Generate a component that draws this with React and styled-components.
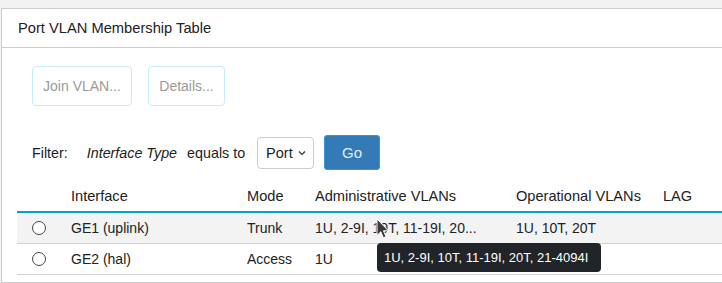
import React from 'react'
import styled, { createGlobalStyle } from 'styled-components'

const GlobalStyle = createGlobalStyle`
    body {
        margin: 0;
        background: #f2f2f2;
        font-family: 'Liberation Sans', Arial, sans-serif;
        color: #222;
        overflow: hidden;
    }
`

const Page = styled.div`
    padding: 8px 0 0 1px;
    height: 283px;
    box-sizing: border-box;
`

const Card = styled.div`
    position: relative;
    background: #fff;
    border: 1px solid #ccc;
    border-right: none;
    height: 100%;
    box-sizing: border-box;
`

const CardHeader = styled.div`
    display: flex;
    align-items: center;
    height: 38px;
    padding-left: 16px;
    font-size: 14.7px;
    border-bottom: 1px solid #ccc;
`

const Toolbar = styled.div`
    display: flex;
    gap: 16px;
    padding: 18px 0 0 30px;
`

const GhostButton = styled.button`
    height: 40px;
    width: ${(p) => p.width}px;
    background: #fff;
    border: 1px solid #c6ecf7;
    border-radius: 4px;
    color: #9a9a9a;
    font-family: inherit;
    font-size: 14px;
    padding: 0;
`

const FilterRow = styled.div`
    display: flex;
    align-items: center;
    padding: 29px 0 0 30px;
    font-size: 14.3px;
`

const FilterLabel = styled.span`
    margin-right: 19px;
`

const FieldName = styled.em`
    margin-right: 10px;
`

const Select = styled.div`
    display: flex;
    align-items: center;
    justify-content: space-between;
    box-sizing: border-box;
    width: 57px;
    height: 32px;
    margin-left: 12px;
    padding: 0 7px 0 8px;
    border: 1px solid #ccc;
    border-radius: 4px;
    font-size: 14.5px;
`

const GoButton = styled.button`
    width: 56px;
    height: 35px;
    margin-left: 10px;
    background: #337ab7;
    border: 1px solid #2b9bd6;
    border-radius: 3px;
    color: #e4ecf4;
    font-family: inherit;
    font-size: 15px;
    padding: 0;
`

const Table = styled.div`
    margin: 10px 0 0 15px;
    font-size: 14px;
`

const Row = styled.div`
    display: grid;
    grid-template-columns: 54px 176px 68px 201px 147px 1fr;
    align-items: center;
    height: ${(p) => (p.head ? 31 : 30)}px;
    background: ${(p) => (p.shaded ? '#f3f3f3' : '#fff')};
    border-bottom: ${(p) => (p.head ? '2px solid #049fd9' : '1px solid #d0d0d0')};
    font-size: ${(p) => (p.head ? '14.6px' : '14px')};
    white-space: nowrap;
`

const Radio = styled.span`
    justify-self: start;
    margin-left: 15px;
    width: 12px;
    height: 12px;
    border: 1px solid #444;
    border-radius: 50%;
    background: #fff;
`

const Tooltip = styled.div`
    position: absolute;
    left: 375px;
    top: 234px;
    width: 224px;
    height: 29px;
    box-sizing: border-box;
    padding-left: 7px;
    display: flex;
    align-items: center;
    background: #212529;
    border-radius: 4px;
    color: #fff;
    font-size: 13px;
`

const Cursor = styled.svg`
    position: absolute;
    left: 374px;
    top: 209px;
`

function App() {
    return (
        <Page>
            <GlobalStyle />
            <Card>
                <CardHeader>Port VLAN Membership Table</CardHeader>
                <Toolbar>
                    <GhostButton width={100}>Join VLAN...</GhostButton>
                    <GhostButton width={77}>Details...</GhostButton>
                </Toolbar>
                <FilterRow>
                    <FilterLabel>Filter:</FilterLabel>
                    <FieldName>Interface Type</FieldName>
                    <span>equals to</span>
                    <Select>
                        Port
                        <svg width="8" height="6" viewBox="0 0 8 6">
                            <path d="M1 1.5 L4 4.5 L7 1.5" fill="none" stroke="#333" strokeWidth="1.2" />
                        </svg>
                    </Select>
                    <GoButton>Go</GoButton>
                </FilterRow>
                <Table>
                    <Row head>
                        <span />
                        <span>Interface</span>
                        <span>Mode</span>
                        <span>Administrative VLANs</span>
                        <span>Operational VLANs</span>
                        <span>LAG</span>
                    </Row>
                    <Row shaded>
                        <Radio />
                        <span>GE1 (uplink)</span>
                        <span>Trunk</span>
                        <span>1U, 2-9I, 10T, 11-19I, 20...</span>
                        <span>1U, 10T, 20T</span>
                        <span />
                    </Row>
                    <Row>
                        <Radio />
                        <span>GE2 (hal)</span>
                        <span>Access</span>
                        <span>1U</span>
                        <span />
                        <span />
                    </Row>
                </Table>
                <Tooltip>1U, 2-9I, 10T, 11-19I, 20T, 21-4094I</Tooltip>
                <Cursor width="14" height="22" viewBox="0 0 14 22">
                    <path d="M1 1 L1 17.5 L4.8 13.8 L7.3 19.8 L10 18.7 L7.5 12.8 L12.5 12.8 Z" fill="#3a3a3a" stroke="#fff" strokeWidth="1" />
                </Cursor>
            </Card>
        </Page>
    )
}

export default App
